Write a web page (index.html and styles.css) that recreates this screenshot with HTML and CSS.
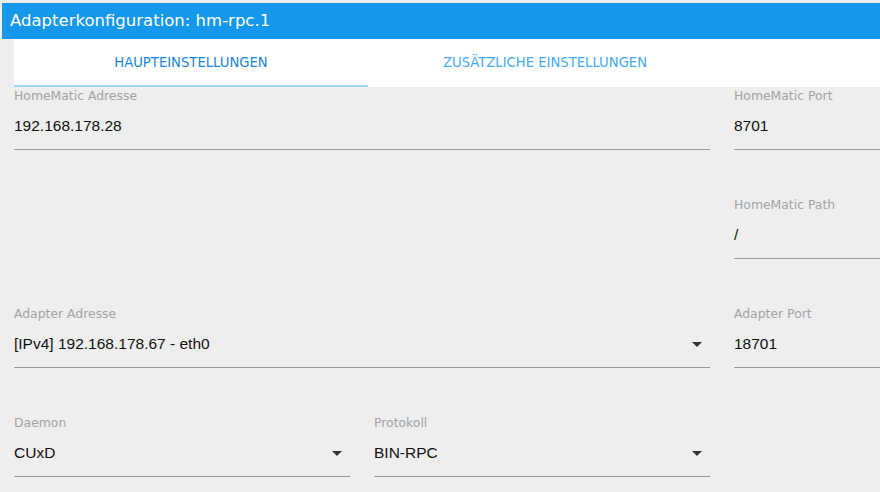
FILE: index.html
```html
<!DOCTYPE html>
<html lang="de">
<head>
<meta charset="utf-8">
<title>Adapterkonfiguration: hm-rpc.1</title>
<link rel="stylesheet" href="styles.css">
</head>
<body>
<div class="titlebar">Adapterkonfiguration: hm-rpc.1</div>
<div class="tabs">
  <div class="tab tab-active">HAUPTEINSTELLUNGEN</div>
  <div class="tab">ZUSÄTZLICHE EINSTELLUNGEN</div>
</div>
<div class="form">
  <div class="field span2">
    <div class="label">HomeMatic Adresse</div>
    <div class="input">192.168.178.28</div>
  </div>
  <div class="field col3">
    <div class="label">HomeMatic Port</div>
    <div class="input">8701</div>
  </div>
  <div class="field col3">
    <div class="label">HomeMatic Path</div>
    <div class="input">/</div>
  </div>
  <div class="field span2">
    <div class="label">Adapter Adresse</div>
    <div class="input select">[IPv4] 192.168.178.67 - eth0<span class="arrow"></span></div>
  </div>
  <div class="field col3">
    <div class="label">Adapter Port</div>
    <div class="input">18701</div>
  </div>
  <div class="field col1">
    <div class="label">Daemon</div>
    <div class="input select">CUxD<span class="arrow"></span></div>
  </div>
  <div class="field col2">
    <div class="label">Protokoll</div>
    <div class="input select">BIN-RPC<span class="arrow"></span></div>
  </div>
</div>
</body>
</html>
```

FILE: styles.css
```css
html, body {
  margin: 0;
  padding: 0;
}
body {
  background: #eeeeee;
  width: 880px;
  height: 492px;
  overflow: hidden;
  font-family: "DejaVu Sans", sans-serif;
}
.titlebar {
  margin: 3px 0 0 2px;
  height: 36px;
  line-height: 36px;
  background: #1598e9;
  color: #ffffff;
  padding-left: 8px;
  font-size: 16.5px;
  white-space: nowrap;
}
.tabs {
  margin-left: 14px;
  display: flex;
  background: #ffffff;
  height: 48px;
}
.tab {
  width: 354px;
  height: 48px;
  line-height: 48px;
  text-align: center;
  font-size: 13.2px;
  color: #45aaf0;
  white-space: nowrap;
}
.tab-active {
  color: #1985d9;
  box-shadow: inset 0 -2px 0 #a6d8f8;
}
.form {
  padding-left: 14px;
  display: grid;
  grid-template-columns: repeat(4, 336px);
  column-gap: 24px;
  row-gap: 46px;
  width: 1500px;
}
.span2 { grid-column: 1 / span 2; }
.col1 { grid-column: 1; }
.col2 { grid-column: 2; }
.col3 { grid-column: 3; }
.label {
  height: 16px;
  line-height: 17px;
  font-size: 12.4px;
  color: #a3a3a3;
  white-space: nowrap;
}
.input {
  position: relative;
  height: 46px;
  line-height: 46px;
  border-bottom: 1px solid #9a9a9a;
  font-family: "Liberation Sans", sans-serif;
  font-size: 15.5px;
  color: #111111;
  white-space: nowrap;
}
.arrow {
  position: absolute;
  right: 8px;
  top: 21px;
  width: 0;
  height: 0;
  border-left: 5px solid transparent;
  border-right: 5px solid transparent;
  border-top: 5px solid #333333;
}
```
